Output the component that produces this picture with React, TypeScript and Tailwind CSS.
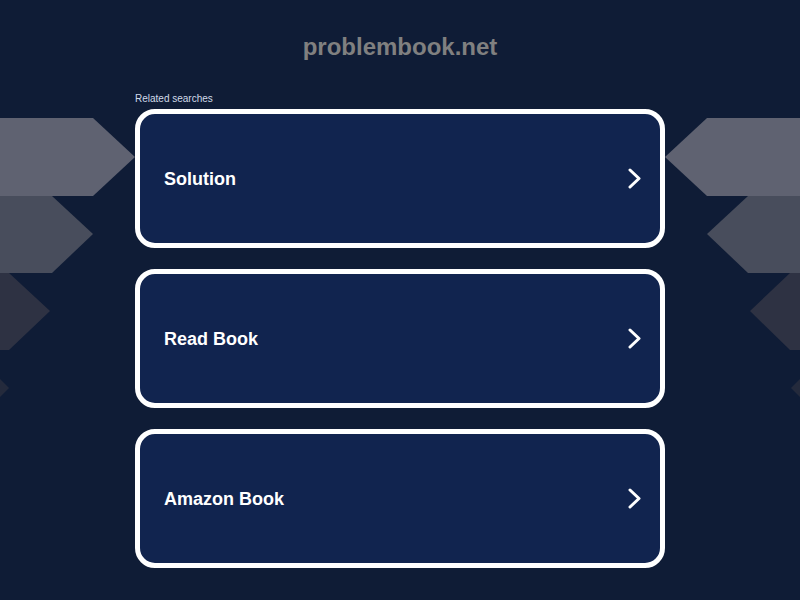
const searches = ['Solution', 'Read Book', 'Amazon Book'];

const shapes = [
  { fill: '#5f6271', left: '0,118 93,118 135,157 93,196 0,196', right: '800,118 707,118 665,157 707,196 800,196' },
  { fill: '#484d5c', left: '0,196 52,196 93,234 52,273 0,273', right: '800,196 748,196 707,234 748,273 800,273' },
  { fill: '#2e3243', left: '0,273 9,273 50,311 9,350 0,350', right: '800,273 790,273 750,311 790,350 800,350' },
  { fill: '#242a3c', left: '0,379 9,388 0,397', right: '800,379 791,388 800,397' },
];

const Chevron = () => (
  <svg width="14" height="21" viewBox="0 0 14 21" fill="none">
    <path d="M2 2 L11 10.5 L2 19" stroke="white" strokeWidth="3" strokeLinecap="round" strokeLinejoin="round" />
  </svg>
);

const App = () => {
  return (
    <div className="relative h-screen w-full overflow-hidden bg-[#0f1c36] font-['Liberation_Sans',Arial,sans-serif]">
      {/* background arrows */}
      <svg className="absolute inset-0" width="800" height="600" viewBox="0 0 800 600">
        {shapes.map((s, i) => (
          <g key={i} fill={s.fill}>
            <polygon points={s.left} />
            <polygon points={s.right} />
          </g>
        ))}
      </svg>

      <div className="relative mx-auto flex w-[530px] flex-col pt-[33px]">
        <h1 className="text-center text-[24px] font-bold leading-[28px] text-[#808080]">problembook.net</h1>

        <p className="mt-[32px] mb-[4px] text-[10px] leading-[12px] text-[#d0dae8]">Related searches</p>

        <ul className="flex flex-col gap-[21px]">
          {searches.map((item) => (
            <li key={item}>
              <a
                href="#"
                className="flex h-[139px] items-center justify-between rounded-[20px] border-[5px] border-white bg-[#11244f] pl-6 pr-[18px]"
              >
                <span className="pt-[2px] text-[18px] font-bold text-white">{item}</span>
                <Chevron />
              </a>
            </li>
          ))}
        </ul>
      </div>
    </div>
  );
};

export default App;
